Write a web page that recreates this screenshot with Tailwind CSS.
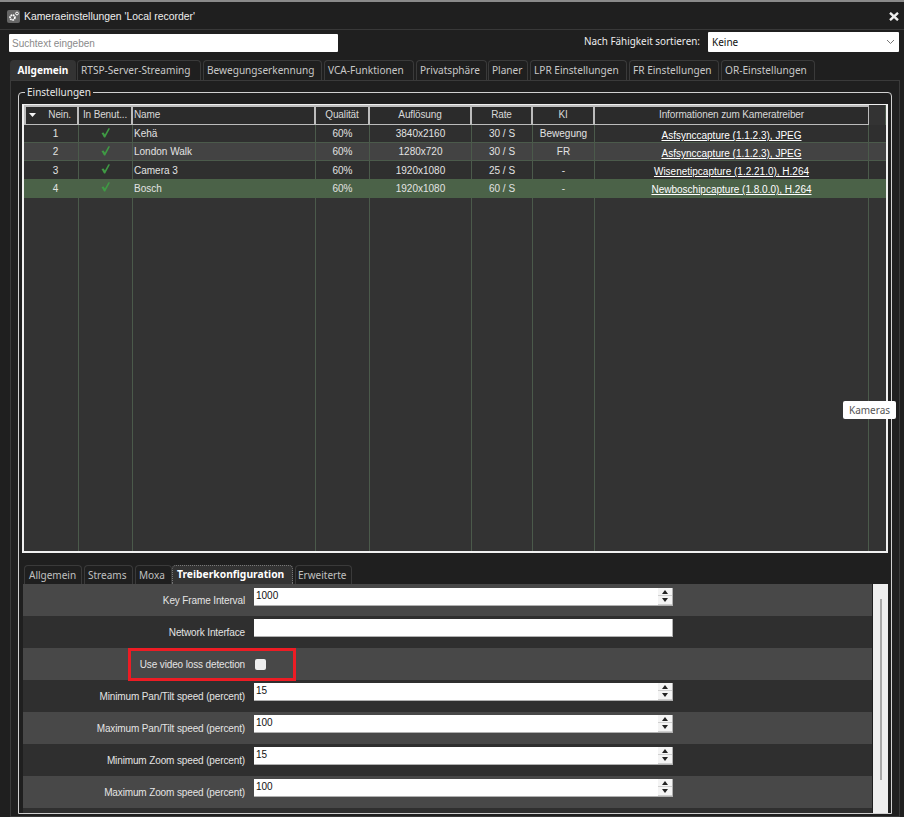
<!DOCTYPE html>
<html lang="de">
<head>
<meta charset="utf-8">
<script src="https://cdn.jsdelivr.net/npm/@tailwindcss/browser@4"></script>
</head>
<body class="bg-[#1f1f1f]">
<div class="w-[904px] h-[817px] overflow-hidden relative flex flex-col bg-[#1f1f1f] border-t-2 border-[#8a8a8a] font-['Liberation_Sans',sans-serif] text-[10.5px] text-[#e2e2e2]">

  <!-- title bar -->
  <div class="h-[28px] shrink-0 flex items-center pt-[2px] pl-[7px] pr-[5px] border-b border-[#383838]">
    <svg class="w-[13px] h-[13px]" viewBox="0 0 13 13"><rect width="13" height="13" rx="2" fill="#666"/><circle cx="5.5" cy="7.5" r="2.4" fill="none" stroke="#fff" stroke-width="1.8" stroke-dasharray="1.5 .6"/><circle cx="10" cy="3.5" r="1.4" fill="none" stroke="#fff" stroke-width="1"/></svg>
    <span class="ml-[4px] text-[10.4px] text-[#eeeeee]">Kameraeinstellungen 'Local recorder'</span>
    <svg class="ml-auto w-[10px] h-[9px]" viewBox="0 0 10 9"><path d="M1 .8 L9 8.2 M9 .8 L1 8.2" stroke="#eee" stroke-width="2.4"/></svg>
  </div>

  <!-- search row -->
  <div class="h-[30px] shrink-0 flex items-start pt-[2px] pl-[9px] pr-[5px]">
    <div class="w-[329px] h-[18px] mt-[2px] bg-white rounded-[1px] flex items-center pl-[3px] text-[#8a8a8a] text-[10px]">Suchtext eingeben</div>
    <span class="ml-auto mr-[8px] mt-[2px] text-[#eeeeee] text-[9.9px] font-['Noto_Sans',sans-serif]">Nach Fähigkeit sortieren:</span>
    <div class="w-[191px] h-[20px] bg-white rounded-[1px] flex items-center pl-[4px] pr-[4px] text-[#111] text-[10px] font-['Noto_Sans',sans-serif]">Keine
      <svg class="ml-auto w-[9px] h-[6px]" viewBox="0 0 9 6"><path d="M1 1 L4.5 4.5 L8 1" fill="none" stroke="#777" stroke-width="1"/></svg>
    </div>
  </div>

  <!-- main tabs -->
  <div class="h-[20px] shrink-0 flex gap-[2px] pl-[10px] font-['Noto_Sans',sans-serif] text-[10.1px] text-[#c8c8c8]">
    <div class="w-[66px] pt-[1px] bg-[#333333] rounded-t-[4px] flex items-center justify-center font-bold text-white">Allgemein</div>
    <div class="w-[124px] pt-[1px] -ml-[1px] pl-[3px] border border-b-0 border-[#3a3a3a] rounded-t-[4px] flex items-center">RTSP-Server-Streaming</div>
    <div class="w-[119px] pt-[1px] pl-[3px] border border-b-0 border-[#3a3a3a] rounded-t-[4px] flex items-center">Bewegungserkennung</div>
    <div class="w-[90px] pt-[1px] pl-[3px] border border-b-0 border-[#3a3a3a] rounded-t-[4px] flex items-center">VCA-Funktionen</div>
    <div class="w-[71px] pt-[1px] pl-[3px] border border-b-0 border-[#3a3a3a] rounded-t-[4px] flex items-center">Privatsphäre</div>
    <div class="w-[40px] pt-[1px] -ml-[1px] pl-[3px] border border-b-0 border-[#3a3a3a] rounded-t-[4px] flex items-center">Planer</div>
    <div class="w-[97px] pt-[1px] pl-[3px] border border-b-0 border-[#3a3a3a] rounded-t-[4px] flex items-center">LPR Einstellungen</div>
    <div class="w-[90px] pt-[1px] pl-[3px] border border-b-0 border-[#3a3a3a] rounded-t-[4px] flex items-center">FR Einstellungen</div>
    <div class="w-[94px] pt-[1px] pl-[3px] border border-b-0 border-[#3a3a3a] rounded-t-[4px] flex items-center">OR-Einstellungen</div>
  </div>

  <!-- tab panel -->
  <div class="flex-1 ml-[10px] mr-[4px] border border-[#3a3a3a] pt-[11px] pl-[7px] pr-[7px] pb-[2px] min-h-0 flex flex-col">
    <!-- fieldset -->
    <div class="relative flex-1 min-h-0 border border-[#d0d0d0] rounded-t-[4px] pt-[11px] pl-[3px] pr-[3px] flex flex-col">
      <span class="absolute -top-[7px] left-[6px] bg-[#1f1f1f] px-[2px] text-[10px] text-[#e8e8e8] font-['Noto_Sans',sans-serif] leading-[13px]">Einstellungen</span>

      <!-- table -->
      <div class="h-[449px] shrink-0 border-2 border-[#f0f0f0] border-t-[1px] flex flex-col bg-[#333333] text-center">
        <!-- header -->
        <div class="h-[20px] shrink-0 grid grid-cols-[55px_54px_183px_54px_102px_61px_62px_274px_1fr] text-[10px] tracking-[-0.13px] text-[#d8d8d8] items-stretch">
          <div class="border-t-2 border-l-2 border-r-2 border-b border-[#bcbcbc] bg-[#2b2b2b] flex items-center pb-[2px] pl-[3px]"><svg class="w-[7px] h-[4px]" viewBox="0 0 7 4"><path d="M0 0 H7 L3.5 4 Z" fill="#f4f4f4"/></svg><span class="ml-auto mr-[6px]">Nein.</span></div>
          <div class="border-t-2 border-b border-r-2 border-[#bcbcbc] bg-[#2b2b2b] flex items-center pb-[2px] justify-center">In Benut...</div>
          <div class="border-t-2 border-b border-r-2 border-[#bcbcbc] bg-[#2b2b2b] flex items-center pb-[2px] pl-[1px]">Name</div>
          <div class="border-t-2 border-b border-r-2 border-[#bcbcbc] bg-[#2b2b2b] flex items-center pb-[2px] justify-center">Qualität</div>
          <div class="border-t-2 border-b border-r-2 border-[#bcbcbc] bg-[#2b2b2b] flex items-center pb-[2px] justify-center">Auflösung</div>
          <div class="border-t-2 border-b border-r-2 border-[#bcbcbc] bg-[#2b2b2b] flex items-center pb-[2px] justify-center">Rate</div>
          <div class="border-t-2 border-b border-r-2 border-[#bcbcbc] bg-[#2b2b2b] flex items-center pb-[2px] justify-center">KI</div>
          <div class="border-t-2 border-b border-r border-[#bcbcbc] bg-[#2b2b2b] flex items-center pb-[2px] justify-center">Informationen zum Kameratreiber</div>
          <div class="border-r border-[#4b5a4b]"></div>
        </div>
        <!-- rows -->
        <div class="h-[18px] shrink-0 grid grid-cols-[55px_54px_183px_54px_102px_61px_62px_274px_1fr] border-b border-[#4b5a4b] bg-[#2f2f2f] text-[10px] leading-[17px]">
          <div class="border-r border-[#4b5a4b] pl-[9px]">1</div>
          <div class="border-r border-[#4b5a4b] flex justify-center pt-[3px]"><svg class="w-[9px] h-[10px]" viewBox="0 0 9 10"><path d="M0.5 5 L2.6 4.4 L3.9 6.4 L7.4 0.3 L9 0.6 L4.2 9.5 L3 9.5 Z" fill="#3f9a44"/></svg></div>
          <div class="border-r border-[#4b5a4b] text-left pl-[1px]">Kehä</div>
          <div class="border-r border-[#4b5a4b]">60%</div>
          <div class="border-r border-[#4b5a4b]">3840x2160</div>
          <div class="border-r border-[#4b5a4b]">30 / S</div>
          <div class="border-r border-[#4b5a4b]">Bewegung</div>
          <div class="border-r border-[#4b5a4b] underline pt-[2px] text-white">Asfsynccapture (1.1.2.3), JPEG</div>
          <div></div>
        </div>
        <div class="h-[18px] shrink-0 grid grid-cols-[55px_54px_183px_54px_102px_61px_62px_274px_1fr] border-b border-[#4b5a4b] bg-[#434343] text-[10px] leading-[17px]">
          <div class="border-r border-[#4b5a4b] pl-[9px]">2</div>
          <div class="border-r border-[#4b5a4b] flex justify-center pt-[3px]"><svg class="w-[9px] h-[10px]" viewBox="0 0 9 10"><path d="M0.5 5 L2.6 4.4 L3.9 6.4 L7.4 0.3 L9 0.6 L4.2 9.5 L3 9.5 Z" fill="#3f9a44"/></svg></div>
          <div class="border-r border-[#4b5a4b] text-left pl-[1px]">London Walk</div>
          <div class="border-r border-[#4b5a4b]">60%</div>
          <div class="border-r border-[#4b5a4b]">1280x720</div>
          <div class="border-r border-[#4b5a4b]">30 / S</div>
          <div class="border-r border-[#4b5a4b]">FR</div>
          <div class="border-r border-[#4b5a4b] underline pt-[2px] text-white">Asfsynccapture (1.1.2.3), JPEG</div>
          <div></div>
        </div>
        <div class="h-[18px] shrink-0 grid grid-cols-[55px_54px_183px_54px_102px_61px_62px_274px_1fr] bg-[#2f2f2f] text-[10px] leading-[19px]">
          <div class="border-r border-[#4b5a4b] pl-[9px]">3</div>
          <div class="border-r border-[#4b5a4b] flex justify-center pt-[3px]"><svg class="w-[9px] h-[10px]" viewBox="0 0 9 10"><path d="M0.5 5 L2.6 4.4 L3.9 6.4 L7.4 0.3 L9 0.6 L4.2 9.5 L3 9.5 Z" fill="#3f9a44"/></svg></div>
          <div class="border-r border-[#4b5a4b] text-left pl-[1px]">Camera 3</div>
          <div class="border-r border-[#4b5a4b]">60%</div>
          <div class="border-r border-[#4b5a4b]">1920x1080</div>
          <div class="border-r border-[#4b5a4b]">25 / S</div>
          <div class="border-r border-[#4b5a4b]">-</div>
          <div class="border-r border-[#4b5a4b] underline pt-[1px] text-white">Wisenetipcapture (1.2.21.0), H.264</div>
          <div></div>
        </div>
        <div class="h-[19px] shrink-0 grid grid-cols-[55px_54px_183px_54px_102px_61px_62px_274px_1fr] bg-[#4b6248] text-[10px] leading-[19px]">
          <div class="pl-[9px] pr-[1px]">4</div>
          <div class="flex justify-center pt-[3px] pr-[1px]"><svg class="w-[9px] h-[10px]" viewBox="0 0 9 10"><path d="M0.5 5 L2.6 4.4 L3.9 6.4 L7.4 0.3 L9 0.6 L4.2 9.5 L3 9.5 Z" fill="#3f9a44"/></svg></div>
          <div class="text-left pl-[1px]">Bosch</div>
          <div class="pr-[1px]">60%</div>
          <div class="pr-[1px]">1920x1080</div>
          <div class="pr-[1px]">60 / S</div>
          <div class="pr-[1px]">-</div>
          <div class="underline pt-[1px] text-white pr-[1px]">Newboschipcapture (1.8.0.0), H.264</div>
          <div></div>
        </div>
        <!-- filler -->
        <div class="flex-1 grid grid-cols-[55px_54px_183px_54px_102px_61px_62px_274px_1fr] bg-[#333333]">
          <div class="border-r border-[#4b5a4b]"></div>
          <div class="border-r border-[#4b5a4b]"></div>
          <div class="border-r border-[#4b5a4b]"></div>
          <div class="border-r border-[#4b5a4b]"></div>
          <div class="border-r border-[#4b5a4b]"></div>
          <div class="border-r border-[#4b5a4b]"></div>
          <div class="border-r border-[#4b5a4b]"></div>
          <div class="border-r border-[#4b5a4b]"></div>
          <div></div>
        </div>
      </div>

      <!-- sub tabs -->
      <div class="mt-[12px] h-[19px] shrink-0 flex gap-[2px] pl-[2px] font-['Noto_Sans',sans-serif] text-[10px] text-[#c0c0c0]">
        <div class="w-[58px] pl-[4px] border border-b-0 border-[#3a3a3a] rounded-t-[4px] flex items-center">Allgemein</div>
        <div class="w-[49px] pl-[3px] border border-b-0 border-[#3a3a3a] rounded-t-[4px] flex items-center">Streams</div>
        <div class="w-[37px] pl-[3px] border border-b-0 border-[#3a3a3a] rounded-t-[4px] flex items-center">Moxa</div>
        <div class="w-[121px] -ml-[2px] pl-[4px] bg-[#333333] border border-dotted border-b-0 border-[#777] rounded-t-[4px] flex items-center font-bold text-[10.3px] text-white">Treiberkonfiguration</div>
        <div class="w-[57px] pl-[2px] border border-b-0 border-[#3a3a3a] rounded-t-[4px] flex items-center">Erweiterte</div>
      </div>

      <!-- property grid + scrollbar -->
      <div class="flex-1 min-h-0 flex pl-[1px] text-[10px] tracking-[-0.13px] text-[#e4e4e4]">
        <div class="relative w-[849px] flex flex-col overflow-hidden">
          <div class="h-[32px] shrink-0 bg-[#484848] flex items-start">
            <span class="w-[222px] text-right mt-[9px]">Key Frame Interval</span>
            <div class="ml-[9px] mt-[4px] w-[419px] h-[18px] bg-white border-b border-r border-[#b0b0b0] flex items-center text-[10px] tracking-normal text-[#111] pl-[2px]"><span class="pb-[3px]">1000</span>
              <div class="ml-auto w-[14px] h-[17px] bg-[#f4f4f4] flex flex-col"><div class="h-[8px] border-b border-[#cfcfcf] flex items-center justify-center"><svg class="w-[6px] h-[4px]" viewBox="0 0 6 4"><path d="M0 4 H6 L3 0 Z" fill="#222"/></svg></div><div class="h-[9px] border-b border-[#cfcfcf] flex items-center justify-center"><svg class="w-[6px] h-[4px]" viewBox="0 0 6 4"><path d="M0 0 H6 L3 4 Z" fill="#222"/></svg></div></div>
            </div>
          </div>
          <div class="h-[32px] shrink-0 bg-[#2f2f2f] flex items-start">
            <span class="w-[222px] text-right mt-[9px]">Network Interface</span>
            <div class="ml-[9px] mt-[3px] w-[419px] h-[18px] bg-white border-b border-r border-[#b0b0b0]"></div>
          </div>
          <div class="h-[32px] shrink-0 bg-[#484848] flex items-center">
            <span class="w-[222px] text-right">Use video loss detection</span>
            <div class="ml-[10px] w-[11px] h-[11px] bg-[#eeeeee] rounded-[2px]"></div>
          </div>
          <div class="h-[32px] shrink-0 bg-[#2f2f2f] flex items-start">
            <span class="w-[222px] text-right mt-[9px]">Minimum Pan/Tilt speed (percent)</span>
            <div class="ml-[9px] mt-[3px] w-[419px] h-[18px] bg-white border-b border-r border-[#b0b0b0] flex items-center text-[10px] tracking-normal text-[#111] pl-[2px]"><span class="pb-[3px]">15</span>
              <div class="ml-auto w-[14px] h-[17px] bg-[#f4f4f4] flex flex-col"><div class="h-[8px] border-b border-[#cfcfcf] flex items-center justify-center"><svg class="w-[6px] h-[4px]" viewBox="0 0 6 4"><path d="M0 4 H6 L3 0 Z" fill="#222"/></svg></div><div class="h-[9px] border-b border-[#cfcfcf] flex items-center justify-center"><svg class="w-[6px] h-[4px]" viewBox="0 0 6 4"><path d="M0 0 H6 L3 4 Z" fill="#222"/></svg></div></div>
            </div>
          </div>
          <div class="h-[32px] shrink-0 bg-[#484848] flex items-start">
            <span class="w-[222px] text-right mt-[9px]">Maximum Pan/Tilt speed (percent)</span>
            <div class="ml-[9px] mt-[3px] w-[419px] h-[18px] bg-white border-b border-r border-[#b0b0b0] flex items-center text-[10px] tracking-normal text-[#111] pl-[2px]"><span class="pb-[3px]">100</span>
              <div class="ml-auto w-[14px] h-[17px] bg-[#f4f4f4] flex flex-col"><div class="h-[8px] border-b border-[#cfcfcf] flex items-center justify-center"><svg class="w-[6px] h-[4px]" viewBox="0 0 6 4"><path d="M0 4 H6 L3 0 Z" fill="#222"/></svg></div><div class="h-[9px] border-b border-[#cfcfcf] flex items-center justify-center"><svg class="w-[6px] h-[4px]" viewBox="0 0 6 4"><path d="M0 0 H6 L3 4 Z" fill="#222"/></svg></div></div>
            </div>
          </div>
          <div class="h-[32px] shrink-0 bg-[#2f2f2f] flex items-start">
            <span class="w-[222px] text-right mt-[9px]">Minimum Zoom speed (percent)</span>
            <div class="ml-[9px] mt-[3px] w-[419px] h-[18px] bg-white border-b border-r border-[#b0b0b0] flex items-center text-[10px] tracking-normal text-[#111] pl-[2px]"><span class="pb-[3px]">15</span>
              <div class="ml-auto w-[14px] h-[17px] bg-[#f4f4f4] flex flex-col"><div class="h-[8px] border-b border-[#cfcfcf] flex items-center justify-center"><svg class="w-[6px] h-[4px]" viewBox="0 0 6 4"><path d="M0 4 H6 L3 0 Z" fill="#222"/></svg></div><div class="h-[9px] border-b border-[#cfcfcf] flex items-center justify-center"><svg class="w-[6px] h-[4px]" viewBox="0 0 6 4"><path d="M0 0 H6 L3 4 Z" fill="#222"/></svg></div></div>
            </div>
          </div>
          <div class="h-[32px] shrink-0 bg-[#484848] flex items-start">
            <span class="w-[222px] text-right mt-[9px]">Maximum Zoom speed (percent)</span>
            <div class="ml-[9px] mt-[3px] w-[419px] h-[18px] bg-white border-b border-r border-[#b0b0b0] flex items-center text-[10px] tracking-normal text-[#111] pl-[2px]"><span class="pb-[3px]">100</span>
              <div class="ml-auto w-[14px] h-[17px] bg-[#f4f4f4] flex flex-col"><div class="h-[8px] border-b border-[#cfcfcf] flex items-center justify-center"><svg class="w-[6px] h-[4px]" viewBox="0 0 6 4"><path d="M0 4 H6 L3 0 Z" fill="#222"/></svg></div><div class="h-[9px] border-b border-[#cfcfcf] flex items-center justify-center"><svg class="w-[6px] h-[4px]" viewBox="0 0 6 4"><path d="M0 0 H6 L3 4 Z" fill="#222"/></svg></div></div>
            </div>
          </div>
          <div class="flex-1 bg-[#2f2f2f]"></div>
          <!-- red highlight -->
          <div class="absolute left-[105px] top-[64px] w-[168px] h-[33px] border-[3px] border-[#ed1c24]"></div>
        </div>
        <div class="w-[15px] ml-[1px] bg-[#eeeeee] flex justify-center pt-[15px]"><div class="w-[2px] h-[181px] bg-[#a8a8a8]"></div></div>
      </div>
    </div>
  </div>

  <!-- tooltip -->
  <div class="absolute left-[843px] top-[399px] w-[53px] h-[18px] bg-white rounded-[2px] flex items-center justify-center text-[10px] text-[#555] font-['Noto_Sans',sans-serif]">Kameras</div>
</div>
</body>
</html>
